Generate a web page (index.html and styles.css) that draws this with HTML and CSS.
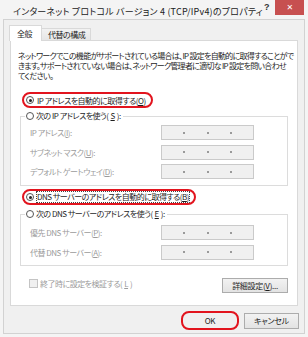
FILE: index.html
```html
<!DOCTYPE html>
<html lang="ja">
<head>
<meta charset="UTF-8" />
<title>インターネット プロトコル バージョン 4 (TCP/IPv4)のプロパティ</title>
<link rel="stylesheet" href="styles.css">
</head>
<body>
<div class="window">
  <div class="titlebar">
    <span class="title">インターネット プロトコル バージョン 4 (TCP/IPv4)のプロパティ</span>
    <span class="help">?</span>
    <span class="close">&#x2715;</span>
  </div>
  <div class="client">
    <div class="tabs">
      <div class="tab active">全般</div>
      <div class="tab">代替の構成</div>
    </div>
    <div class="panel">
      <p class="desc">ネットワークでこの機能がサポートされている場合は、IP 設定を自動的に取得することがで<br>きます。サポートされていない場合は、ネットワーク管理者に適切な IP 設定を問い合わせ<br>てください。</p>

      <div class="mark ip-auto">
        <span class="radio checked"></span>
        <span>IP アドレスを自動的に取得する(<u>O</u>)</span>
      </div>

      <fieldset class="group ip-group">
        <legend><span class="radio"></span>次の IP アドレスを使う(<u>S</u>):</legend>
        <div class="row">
          <span class="label">IP アドレス(<u>I</u>):</span>
          <span class="ipbox"><i></i><b></b><i></i><b></b><i></i><b></b><i></i></span>
        </div>
        <div class="row">
          <span class="label">サブネット マスク(<u>U</u>):</span>
          <span class="ipbox"><i></i><b></b><i></i><b></b><i></i><b></b><i></i></span>
        </div>
        <div class="row">
          <span class="label">デフォルト ゲートウェイ(<u>D</u>):</span>
          <span class="ipbox"><i></i><b></b><i></i><b></b><i></i><b></b><i></i></span>
        </div>
      </fieldset>

      <div class="mark dns-auto">
        <span class="radio checked"></span>
        <span class="focus">DNS サーバーのアドレスを自動的に取得する(<u>B</u>)</span>
      </div>

      <fieldset class="group dns-group">
        <legend><span class="radio"></span>次の DNS サーバーのアドレスを使う(<u>E</u>):</legend>
        <div class="row">
          <span class="label">優先 DNS サーバー(<u>P</u>):</span>
          <span class="ipbox"><i></i><b></b><i></i><b></b><i></i><b></b><i></i></span>
        </div>
        <div class="row">
          <span class="label">代替 DNS サーバー(<u>A</u>):</span>
          <span class="ipbox"><i></i><b></b><i></i><b></b><i></i><b></b><i></i></span>
        </div>
      </fieldset>

      <div class="panel-foot">
        <label class="check"><span class="box"></span>終了時に設定を検証する(<u>L</u>)</label>
        <button class="btn advanced">詳細設定(<u>V</u>)...</button>
      </div>
    </div>
    <div class="actions">
      <span class="mark ok-mark"><button class="btn ok">OK</button></span>
      <button class="btn cancel">キャンセル</button>
    </div>
  </div>
</div>
</body>
</html>
```

FILE: styles.css
```css
/* Reset */
* {
  box-sizing: border-box;
}
html, body {
  margin: 0;
  padding: 0;
}
body {
  width: 308px;
  height: 337px;
  overflow: hidden;
  font-family: "Noto Sans CJK JP", "Liberation Sans", sans-serif;
  font-size: 8px;
  letter-spacing: -0.5px;
  font-feature-settings: "palt";
  color: #1e1e1e;
  background: #f4f4f4;
}
u {
  text-decoration: underline;
  text-underline-offset: 1px;
}

/* Window frame */
.window {
  height: 337px;
  display: flex;
  flex-direction: column;
  background: #f4f4f4;
}
.titlebar {
  height: 19px;
  display: flex;
  align-items: flex-start;
  flex-shrink: 0;
}
.title {
  flex: 1;
  padding: 6px 0 0 13px;
  font-size: 9px;
  letter-spacing: 0.2px;
  line-height: 12px;
  color: #222;
  white-space: nowrap;
}
.help {
  width: 10px;
  padding-top: 2px;
  font-family: "Liberation Sans", sans-serif;
  font-weight: 700;
  font-size: 9px;
  color: #333;
}
.close {
  width: 29px;
  height: 15px;
  margin: 0 4px 0 1px;
  background: #c75050;
  color: #fff;
  font-family: "DejaVu Sans", sans-serif;
  font-size: 8px;
  line-height: 15px;
  text-align: center;
}
.client {
  flex: 1;
  margin: 0 3px 3px 3px;
  padding: 5px 6px 0 6px;
  background: #f0f0f0;
  border: 1px solid #d2d2d2;
}

/* Tabs */
.tabs {
  display: flex;
  align-items: flex-end;
  height: 15px;
  position: relative;
  z-index: 1;
}
.tab {
  height: 12px;
  padding: 0 5px 0 6px;
  border: 1px solid #d9d9d9;
  border-bottom: none;
  background: linear-gradient(#f2f2f2, #e6e6e6);
  line-height: 11px;
}
.tab.active {
  height: 16px;
  margin: 0 -1px -1px -1px;
  width: 33px;
  padding: 2px 0 0 7px;
  background: #fff;
  line-height: 12px;
}

/* Panel */
.panel {
  height: 266px;
  background: #fff;
  border: 1px solid #d9d9d9;
}
.desc {
  margin: 10px 0 0 0;
  padding-left: 7px;
  line-height: 10px;
  letter-spacing: -0.72px;
  white-space: nowrap;
}

/* Red annotation marks */
.mark {
  display: inline-flex;
  align-items: center;
  border: 2px solid #e2141e;
  border-radius: 8px;
}
.ip-auto {
  height: 16px;
  margin: 11px 0 0 11px;
  padding: 0 5px 0 2px;
  gap: 3px;
}
.dns-auto {
  height: 16px;
  margin: 3px 0 0 11px;
  padding: 0 5px 0 2px;
  gap: 3px;
}
.focus {
  outline: 1px dotted #444;
  outline-offset: 0;
  line-height: 10px;
}

/* Radio and check */
.radio {
  display: inline-block;
  width: 8px;
  height: 8px;
  border: 1px solid #555;
  border-radius: 50%;
  background: #fff;
  position: relative;
  flex-shrink: 0;
}
.radio.checked::after {
  content: "";
  position: absolute;
  left: 1.5px;
  top: 1.5px;
  width: 3px;
  height: 3px;
  border-radius: 50%;
  background: #222;
}

/* Group boxes */
.group {
  margin: 2px 9px 0 9px;
  padding: 0 0 6px 0;
  border: 1px solid #dcdcdc;
}
.group legend {
  display: flex;
  align-items: center;
  gap: 2px;
  margin-left: 4px;
  padding: 0 2px 0 1px;
  line-height: 12px;
}
.dns-group {
  margin-top: 3px;
  padding-bottom: 5px;
}
.row {
  display: flex;
  align-items: center;
  height: 15px;
  margin-top: 4.5px;
  padding-left: 9px;
}
.ip-group .row:first-of-type {
  margin-top: 3px;
}
.dns-group .row:first-of-type {
  margin-top: 5px;
}
.label {
  width: 131px;
  color: #9b9b9b;
  white-space: nowrap;
}
.ipbox {
  display: flex;
  align-items: center;
  width: 93px;
  height: 15px;
  background: #f0f0f0;
  border: 1px solid #cacaca;
}
.ipbox i {
  flex: 1;
}
.ipbox b {
  width: 2px;
  height: 2px;
  background: #9a9a9a;
}

/* Panel footer */
.panel-foot {
  display: flex;
  align-items: center;
  justify-content: space-between;
  margin: 12px 9px 0 18px;
}
.check {
  display: flex;
  align-items: center;
  gap: 2px;
  margin-top: -3px;
  color: #9b9b9b;
}
.check .box {
  width: 9px;
  height: 9px;
  border: 1px solid #c4c4c4;
  background: #f0f0f0;
}

/* Buttons */
.btn {
  height: 15px;
  padding: 0;
  font-family: inherit;
  font-size: 8px;
  letter-spacing: -0.3px;
  font-feature-settings: "palt";
  line-height: 13px;
  color: #1e1e1e;
  background: linear-gradient(#f2f2f2, #e3e3e3);
  border: 1px solid #acacac;
  border-radius: 0;
}
.advanced {
  width: 66px;
}
.actions {
  display: flex;
  justify-content: flex-end;
  align-items: center;
  gap: 5px;
  margin-top: 5px;
  margin-right: -1px;
}
.ok-mark {
  padding: 0 1px;
  height: 19px;
  border-radius: 8px;
}
.ok {
  width: 52px;
  border: none;
  background: transparent;
}
.cancel {
  width: 55px;
  height: 16px;
}
```
